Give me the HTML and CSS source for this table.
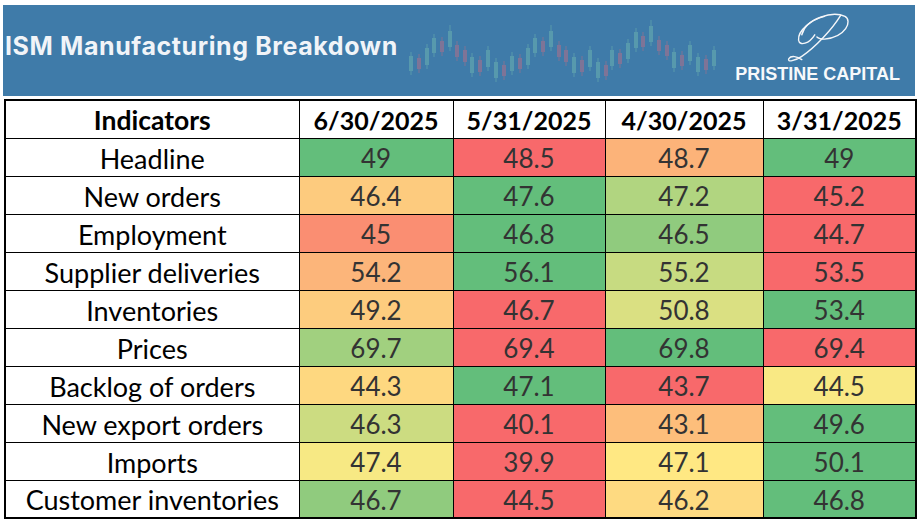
FILE: index.html
```html
<!DOCTYPE html>
<html lang="en">
<head>
<meta charset="utf-8">
<title>ISM Manufacturing Breakdown</title>
<link rel="stylesheet" href="styles.css">
</head>
<body>
<header class="banner">
  <h1 class="title">ISM Manufacturing Breakdown</h1>
  <svg class="candles" width="312" height="91" viewBox="0 0 312 91" aria-hidden="true">
    <g class="up">
      <rect x="5.5" y="47" width="1" height="23"/><rect x="4" y="51" width="4" height="15"/>
      <rect x="21.5" y="39" width="1" height="25"/><rect x="20" y="43" width="4" height="17"/>
      <rect x="28.5" y="29" width="1" height="23"/><rect x="27" y="33" width="4" height="15"/>
      <rect x="44.5" y="20" width="1" height="26"/><rect x="43" y="26" width="4" height="16"/>
      <rect x="66.5" y="48" width="1" height="24"/><rect x="65" y="52" width="4" height="16"/>
      <rect x="82.5" y="41" width="1" height="25"/><rect x="81" y="45" width="4" height="17"/>
      <rect x="90.5" y="53" width="1" height="24"/><rect x="89" y="57" width="4" height="16"/>
      <rect x="106.5" y="47" width="1" height="23"/><rect x="105" y="51" width="4" height="15"/>
      <rect x="122.5" y="39" width="1" height="25"/><rect x="121" y="43" width="4" height="17"/>
      <rect x="129.5" y="29" width="1" height="23"/><rect x="128" y="33" width="4" height="15"/>
      <rect x="145.5" y="20" width="1" height="26"/><rect x="144" y="26" width="4" height="16"/>
      <rect x="168.5" y="48" width="1" height="24"/><rect x="167" y="52" width="4" height="16"/>
      <rect x="184.5" y="41" width="1" height="25"/><rect x="183" y="45" width="4" height="17"/>
      <rect x="192.5" y="53" width="1" height="24"/><rect x="191" y="57" width="4" height="16"/>
      <rect x="206.5" y="41" width="1" height="24"/><rect x="205" y="45" width="4" height="16"/>
      <rect x="222.5" y="34" width="1" height="24"/><rect x="221" y="38" width="4" height="16"/>
      <rect x="230.5" y="23" width="1" height="24"/><rect x="229" y="27" width="4" height="16"/>
      <rect x="245.5" y="15" width="1" height="26"/><rect x="244" y="21" width="4" height="16"/>
      <rect x="268.5" y="43" width="1" height="24"/><rect x="267" y="47" width="4" height="16"/>
      <rect x="284.5" y="36" width="1" height="24"/><rect x="283" y="40" width="4" height="16"/>
      <rect x="292.5" y="48" width="1" height="23"/><rect x="291" y="52" width="4" height="15"/>
      <rect x="308.5" y="41" width="1" height="24"/><rect x="307" y="45" width="4" height="16"/>
    </g>
    <g class="down">
      <rect x="13.5" y="49" width="1" height="19"/><rect x="12" y="53" width="4" height="11"/>
      <rect x="36.5" y="32" width="1" height="19"/><rect x="35" y="36" width="4" height="11"/>
      <rect x="51.5" y="36" width="1" height="20"/><rect x="50" y="40" width="4" height="12"/>
      <rect x="59.5" y="41" width="1" height="20"/><rect x="58" y="45" width="4" height="12"/>
      <rect x="74.5" y="51" width="1" height="20"/><rect x="73" y="55" width="4" height="12"/>
      <rect x="98.5" y="56" width="1" height="19"/><rect x="97" y="60" width="4" height="11"/>
      <rect x="114.5" y="49" width="1" height="19"/><rect x="113" y="53" width="4" height="11"/>
      <rect x="137.5" y="32" width="1" height="19"/><rect x="136" y="36" width="4" height="11"/>
      <rect x="153.5" y="36" width="1" height="20"/><rect x="152" y="40" width="4" height="12"/>
      <rect x="160.5" y="41" width="1" height="20"/><rect x="159" y="45" width="4" height="12"/>
      <rect x="176.5" y="51" width="1" height="20"/><rect x="175" y="55" width="4" height="12"/>
      <rect x="200.5" y="56" width="1" height="19"/><rect x="199" y="60" width="4" height="11"/>
      <rect x="214.5" y="44" width="1" height="19"/><rect x="213" y="48" width="4" height="11"/>
      <rect x="237.5" y="27" width="1" height="19"/><rect x="236" y="31" width="4" height="11"/>
      <rect x="253.5" y="31" width="1" height="19"/><rect x="252" y="35" width="4" height="11"/>
      <rect x="261.5" y="36" width="1" height="19"/><rect x="260" y="40" width="4" height="11"/>
      <rect x="276.5" y="46" width="1" height="19"/><rect x="275" y="50" width="4" height="11"/>
      <rect x="300.5" y="50" width="1" height="19"/><rect x="299" y="54" width="4" height="11"/>
    </g>
  </svg>
  <div class="logo">
    <svg class="logo-mark" width="70" height="54" viewBox="0 0 64 50" aria-hidden="true">
      <path d="M17 22 C 21 6, 46 0, 57 5 C 64 9, 58 24, 38 26 C 34 26, 32 25, 31 24"/>
      <path d="M38 5 C 26 8, 13 18, 14 27 C 15 33, 24 30, 29 22"/>
      <path d="M53 4 C 45 17, 30 33, 17 42 C 11 46, 3 48, 5 44 C 7 41, 13 42, 17 45"/>
    </svg>
    <div class="logo-text">PRISTINE CAPITAL</div>
  </div>
</header>

<table class="grid">
  <colgroup>
    <col class="c-label"><col class="c-d1"><col class="c-d2"><col class="c-d3"><col class="c-d4">
  </colgroup>
  <thead>
    <tr><th class="head-label">Indicators</th><th>6/30/2025</th><th>5/31/2025</th><th>4/30/2025</th><th>3/31/2025</th></tr>
  </thead>
  <tbody>
    <tr><td class="label">Headline</td><td class="g">49</td><td class="r">48.5</td><td style="background:#fcb379">48.7</td><td class="g">49</td></tr>
    <tr><td class="label">New orders</td><td style="background:#fdcb7e">46.4</td><td class="g">47.6</td><td style="background:#b1d580">47.2</td><td class="r">45.2</td></tr>
    <tr><td class="label">Employment</td><td style="background:#fa8e72">45</td><td class="g">46.8</td><td style="background:#90cb7e">46.5</td><td class="r">44.7</td></tr>
    <tr><td class="label">Supplier deliveries</td><td style="background:#fcb57a">54.2</td><td class="g">56.1</td><td style="background:#c7db81">55.2</td><td class="r">53.5</td></tr>
    <tr><td class="label">Inventories</td><td style="background:#fdcc7e">49.2</td><td class="r">46.7</td><td style="background:#dae082">50.8</td><td class="g">53.4</td></tr>
    <tr><td class="label">Prices</td><td style="background:#a1d07f">69.7</td><td class="r">69.4</td><td class="g">69.8</td><td class="r">69.4</td></tr>
    <tr><td class="label">Backlog of orders</td><td style="background:#fed880">44.3</td><td class="g">47.1</td><td class="r">43.7</td><td style="background:#f9e984">44.5</td></tr>
    <tr><td class="label">New export orders</td><td style="background:#ccdc81">46.3</td><td class="r">40.1</td><td style="background:#fdbe7b">43.1</td><td class="g">49.6</td></tr>
    <tr><td class="label">Imports</td><td style="background:#f7e984">47.4</td><td class="r">39.9</td><td style="background:#ffe883">47.1</td><td class="g">50.1</td></tr>
    <tr><td class="label">Customer inventories</td><td style="background:#90cb7e">46.7</td><td class="r">44.5</td><td style="background:#feda81">46.2</td><td class="g">46.8</td></tr>
  </tbody>
</table>
</body>
</html>
```

FILE: styles.css
```css
html, body {
  margin: 0;
  padding: 0;
  background: #ffffff;
}

body {
  width: 918px;
  height: 524px;
  overflow: hidden;
}

.banner {
  display: flex;
  align-items: flex-start;
  height: 91px;
  margin: 5px 3px 0 3px;
  background: #3f7ba9;
}

.title {
  flex: 0 0 400px;
  margin: 26px 0 0 2px;
  font-family: Inter, "Liberation Sans", sans-serif;
  font-weight: 700;
  font-size: 25px;
  line-height: 30px;
  letter-spacing: 0.6px;
  color: #f1f4f8;
  white-space: nowrap;
}

.candles {
  flex: 0 0 312px;
  display: block;
  opacity: 0.6;
}

.candles .up {
  fill: #68aeb0;
}

.candles .down {
  fill: #a8708c;
}

.logo {
  margin-left: auto;
  margin-right: 15px;
  display: flex;
  flex-direction: column;
  align-items: center;
}

.logo-mark {
  display: block;
  margin-top: 6px;
  fill: none;
  stroke: #f4f6f9;
  stroke-width: 1.3;
  stroke-linecap: round;
}

.logo-text {
  margin-top: 0;
  font-family: "Liberation Sans", Arial, sans-serif;
  font-weight: 700;
  font-size: 18px;
  line-height: 18px;
  letter-spacing: 0;
  color: #f7f9fb;
  white-space: nowrap;
}

.grid {
  margin: 3px 0 0 4px;
  width: 911px;
  border-collapse: collapse;
  table-layout: fixed;
  border: 2px solid #000;
  font-family: Lato, "Open Sans", sans-serif;
  font-size: 26px;
}

.c-label { width: 294px; }
.c-d1 { width: 154px; }
.c-d2 { width: 152px; }
.c-d3 { width: 158px; }
.c-d4 { width: 153px; }

.grid tr {
  height: 38px;
}

.grid th,
.grid td {
  border: 1px solid #000;
  padding: 2px 0 0 0;
  text-align: center;
  vertical-align: middle;
  line-height: 1;
}

.grid th {
  font-weight: 700;
  font-size: 25px;
  color: #000;
  background: #fff;
}

.grid th.head-label {
  font-size: 26.5px;
}

.grid td {
  color: #333;
}

.grid td.label {
  font-size: 27px;
  color: #000;
  background: #fff;
}

.grid td.g { background: #63be7b; }
.grid td.r { background: #f8696b; }
```
